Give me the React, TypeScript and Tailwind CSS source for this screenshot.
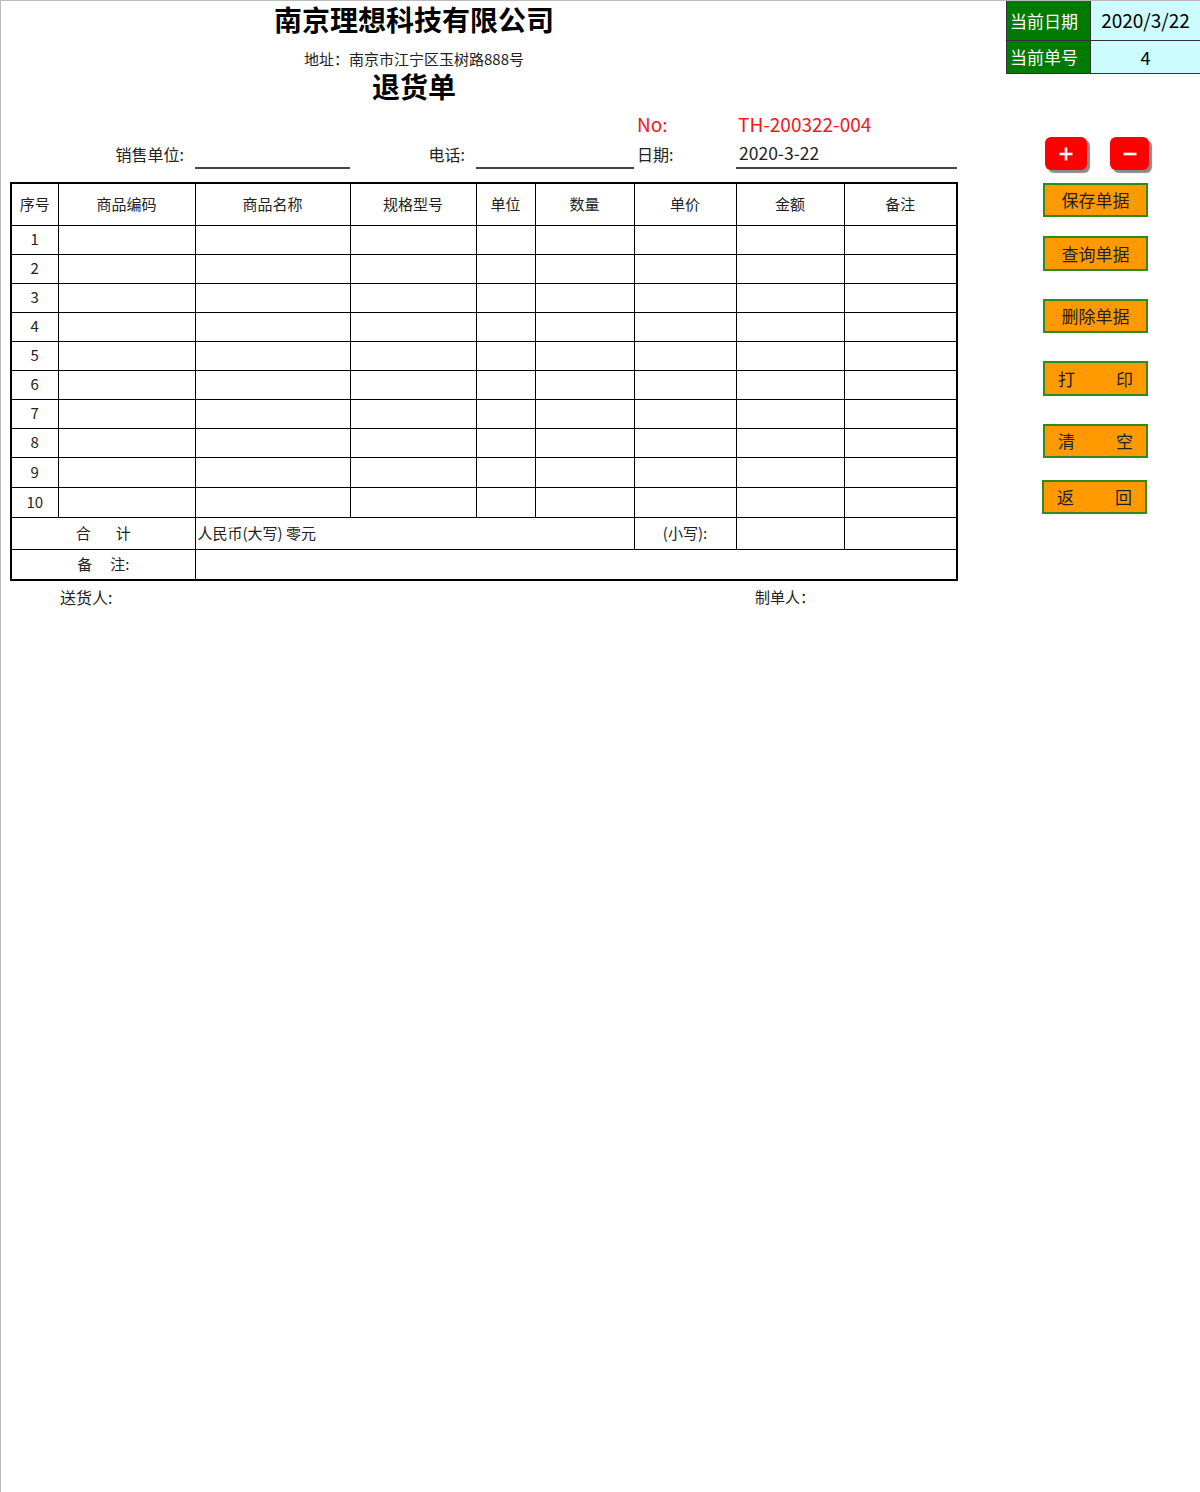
const cols = [47, 137, 155, 126, 59, 99, 102, 108, 113];
const headers = ["序号", "商品编码", "商品名称", "规格型号", "单位", "数量", "单价", "金额", "备注"];
const rows = [1, 2, 3, 4, 5, 6, 7, 8, 9, 10];

const OrangeButton = ({ children, spread = false, className = "" }: { children: React.ReactNode; spread?: boolean; className?: string }) => (
  <div
    className={`w-[105px] flex items-center border-2 border-[#2e8b1e] bg-[#ff9900] text-[17px] text-[#222] ${
      spread ? "justify-between px-[13px]" : "justify-center"
    } ${className}`}
  >
    {children}
  </div>
);

const App = () => {
  return (
    <div className="w-[1200px] h-[1492px] bg-white border-l border-t border-[#bbb] font-['Noto_Sans_CJK_SC',sans-serif] text-[#222] flex">
      {/* Form */}
      <div className="w-[1005px]">
        <div className="w-[826px] text-center">
          <div className="h-[36px] leading-[36px] text-[28px] font-bold text-black">南京理想科技有限公司</div>
          <div className="mt-[10px] h-[24px] leading-[24px] text-[15px]">地址：南京市江宁区玉树路888号</div>
          <div className="h-[30px] leading-[30px] text-[28px] font-bold text-black">退货单</div>
        </div>

        <div className="mt-[8px] h-[30px] flex items-center text-[19px] text-[#f01818]">
          <div className="ml-[636px] w-[101px]">No:</div>
          <div>TH-200322-004</div>
        </div>

        <div className="ml-[9px] h-[30px] flex text-[16px]">
          <div className="w-[185px] flex items-center justify-end pr-[11px]">销售单位:</div>
          <div className="w-[155px] h-[30px] border-b-2 border-[#444]" />
          <div className="w-[126px] flex items-center justify-end pr-[11px]">电话:</div>
          <div className="w-[158px] h-[30px] border-b-2 border-[#444]" />
          <div className="w-[102px] flex items-center pl-[3px]">日期:</div>
          <div className="w-[221px] h-[30px] border-b-2 border-[#444] flex items-center pl-[3px] text-[17.5px]">2020-3-22</div>
        </div>

        <table className="mt-[13px] ml-[9px] border-collapse table-fixed border-2 border-black text-[15px]">
          <colgroup>
            {cols.map((w, i) => (
              <col key={i} style={{ width: w }} />
            ))}
          </colgroup>
          <thead>
            <tr className="h-[42px]">
              {headers.map((h) => (
                <th key={h} className="border border-black font-normal text-center">
                  {h}
                </th>
              ))}
            </tr>
          </thead>
          <tbody>
            {rows.map((n) => (
              <tr key={n} className={n >= 9 ? "h-[30px]" : "h-[29px]"}>
                <td className="border border-black text-center">{n}</td>
                {cols.slice(1).map((_, i) => (
                  <td key={i} className="border border-black" />
                ))}
              </tr>
            ))}
            <tr className="h-[32px]">
              <td colSpan={2} className="border border-black">
                <div className="flex justify-center gap-[25px]">
                  <span>合</span>
                  <span>计</span>
                </div>
              </td>
              <td colSpan={4} className="border border-black pl-[2px]">人民币(大写) 零元</td>
              <td className="border border-black text-center">(小写):</td>
              <td className="border border-black" />
              <td className="border border-black" />
            </tr>
            <tr className="h-[31px]">
              <td colSpan={2} className="border border-black">
                <div className="flex justify-center gap-[18px]">
                  <span>备</span>
                  <span>注:</span>
                </div>
              </td>
              <td colSpan={7} className="border border-black" />
            </tr>
          </tbody>
        </table>

        <div className="mt-[3px] h-[26px] flex items-center text-[16px]">
          <div className="ml-[59px] w-[695px]">送货人:</div>
          <div className="text-[15px]">制单人：</div>
        </div>
      </div>

      {/* Side panel */}
      <div className="w-[194px] flex flex-col">
        <div className="border border-[#333] border-t-0 border-r-0 text-[17px]">
          <div className="h-[40px] flex border-b border-[#333]">
            <div className="w-[84px] bg-[#007a00] text-white flex items-center pl-[3px] border-r border-[#333]">当前日期</div>
            <div className="flex-1 bg-[#ccfcff] flex items-center justify-center text-black text-[19px]">2020/3/22</div>
          </div>
          <div className="h-[32px] flex">
            <div className="w-[84px] bg-[#007a00] text-white flex items-center pl-[3px] border-r border-[#333]">当前单号</div>
            <div className="flex-1 bg-[#ccfcff] flex items-center justify-center text-black text-[18px]">4</div>
          </div>
        </div>

        <div className="mt-[63px] ml-[39px] flex gap-[23px]">
          <div className="w-[42px] h-[33px] rounded-[6px] bg-[#ff0000] shadow-[3px_3px_1px_#8a8a8a] flex items-center justify-center">
            <svg width="16" height="16" viewBox="0 0 16 16">
              <path d="M8 1.5v13M1.5 8h13" stroke="white" strokeWidth="2.6" />
            </svg>
          </div>
          <div className="w-[39px] h-[33px] rounded-[6px] bg-[#ff0000] shadow-[3px_3px_1px_#8a8a8a] flex items-center justify-center">
            <svg width="16" height="16" viewBox="0 0 16 16">
              <path d="M1.5 8h13" stroke="white" strokeWidth="2.6" />
            </svg>
          </div>
        </div>

        <OrangeButton className="mt-[13px] ml-[37px] h-[34px]">保存单据</OrangeButton>
        <OrangeButton className="mt-[19px] ml-[37px] h-[35px]">查询单据</OrangeButton>
        <OrangeButton className="mt-[28px] ml-[37px] h-[34px]">删除单据</OrangeButton>
        <OrangeButton spread className="mt-[28px] ml-[37px] h-[35px]">
          <span>打</span>
          <span>印</span>
        </OrangeButton>
        <OrangeButton spread className="mt-[28px] ml-[37px] h-[34px]">
          <span>清</span>
          <span>空</span>
        </OrangeButton>
        <OrangeButton spread className="mt-[22px] ml-[36px] h-[34px]">
          <span>返</span>
          <span>回</span>
        </OrangeButton>
      </div>
    </div>
  );
};

export default App;
